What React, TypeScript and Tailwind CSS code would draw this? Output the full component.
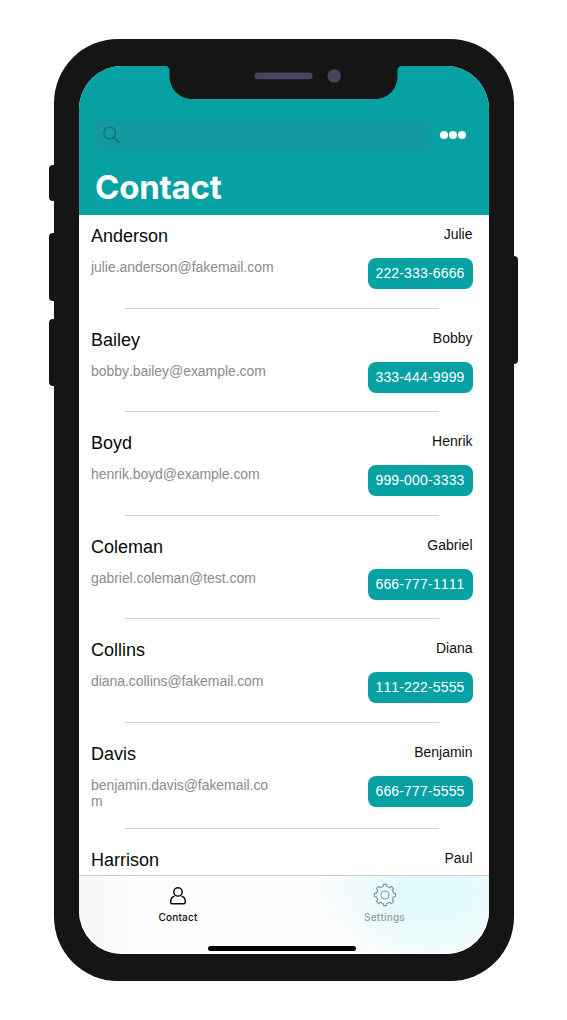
import React from "react";

type Contact = { last: string; first: string; email?: string; phone?: string };

const contacts: Contact[] = [
  { last: "Anderson", first: "Julie", email: "julie.anderson@fakemail.com", phone: "222-333-6666" },
  { last: "Bailey", first: "Bobby", email: "bobby.bailey@example.com", phone: "333-444-9999" },
  { last: "Boyd", first: "Henrik", email: "henrik.boyd@example.com", phone: "999-000-3333" },
  { last: "Coleman", first: "Gabriel", email: "gabriel.coleman@test.com", phone: "666-777-1111" },
  { last: "Collins", first: "Diana", email: "diana.collins@fakemail.com", phone: "111-222-5555" },
  { last: "Davis", first: "Benjamin", email: "benjamin.davis@fakemail.com", phone: "666-777-5555" },
  { last: "Harrison", first: "Paul" },
];

function SearchIcon() {
  return (
    <svg width="18" height="18" viewBox="0 0 18 18" fill="none" stroke="#176f70" strokeWidth="1.3">
      <circle cx="6.7" cy="7" r="5.9" />
      <path d="M11 11.3 16 16.3" strokeWidth="1.8" />
    </svg>
  );
}

function PersonIcon() {
  return (
    <svg width="18" height="20" viewBox="0 0 18 20" fill="none" stroke="#0c0c0c" strokeWidth="1.5" strokeLinejoin="round">
      <circle cx="9" cy="5.9" r="4.2" />
      <path d="M5.4 10.3C3 10.9 1.8 12.6 1.8 15v1.6c0 .7.5 1.1 1.1 1.1h12.2c.6 0 1.1-.4 1.1-1.1V15c0-2.4-1.2-4.1-3.6-4.7" />
    </svg>
  );
}

function gearPoint(radius: number, degrees: number) {
  const a = (degrees * Math.PI) / 180;
  return `${(12 + radius * Math.sin(a)).toFixed(2)} ${(12 - radius * Math.cos(a)).toFixed(2)}`;
}

// Eight square teeth joined by arcs along the rim of the wheel.
const gearPath =
  Array.from({ length: 8 }, (_, i) => {
    const c = i * 45;
    const start = i === 0 ? `M${gearPoint(8.7, c - 11.5)}` : `A8.7 8.7 0 0 1 ${gearPoint(8.7, c - 11.5)}`;
    return `${start}L${gearPoint(10.7, c - 8.5)}L${gearPoint(10.7, c + 8.5)}L${gearPoint(8.7, c + 11.5)}`;
  }).join("") + `A8.7 8.7 0 0 1 ${gearPoint(8.7, -11.5)}Z`;

function GearIcon() {
  return (
    <svg width="24" height="24" viewBox="0 0 24 24" fill="none" stroke="#78979b" strokeWidth="1.1" strokeLinejoin="round">
      <circle cx="12" cy="12" r="4" />
      <path d={gearPath} />
    </svg>
  );
}

function Notch() {
  return (
    <svg className="absolute left-[86px] top-0" width="237" height="33" viewBox="0 0 237 33">
      <path d="M0 0Q4.5 0 4.5 5V9.5C4.5 23 14 33 28 33H210C223 33 232.5 23 232.5 10V5Q232.5 0 237 0Z" fill="#151515" />
      <rect x="89.5" y="6.5" width="58" height="6.8" rx="3.4" fill="#48465e" />
      <circle cx="169.2" cy="9.9" r="6.7" fill="#48465e" />
    </svg>
  );
}

function Row({ contact }: { contact: Contact }) {
  return (
    <li className="shrink-0">
      <div className="flex min-h-[102.5px] justify-between pr-4 pl-3">
        <div className="w-[184px] pt-[21px]">
          <h2 className="text-[18px] leading-[21px] text-[#080808]">{contact.last}</h2>
          {contact.email && (
            <p className="mt-[12px] mb-[19px] text-[14px] leading-4 tracking-[-0.05px] break-all text-[#8b8b8b]">{contact.email}</p>
          )}
        </div>
        <div className="flex flex-col items-end pt-[20px] text-[14px]">
          <span className="leading-[18px] text-[#101010]">{contact.first}</span>
          {contact.phone && (
            <span className="mt-[15px] flex h-[31px] w-[105px] items-center justify-center rounded-[8px] bg-[#07a1a4] tracking-[0.16px] text-white">
              {contact.phone}
            </span>
          )}
        </div>
      </div>
      <div className="ml-[46px] h-px w-[314px] bg-[#d0d0d0]" />
    </li>
  );
}

export default function App() {
  return (
    <main className="flex h-[1020px] w-[567px] overflow-hidden bg-white pt-[39px] pl-[49px] font-['Liberation_Sans',Arial,sans-serif] [font-kerning:none]">
      <div className="flex w-[5px] shrink-0 flex-col pt-[126px]">
        <i className="h-[36px] rounded-l-[4px] bg-[#151515]" />
        <i className="mt-[32px] h-[68px] rounded-l-[4px] bg-[#151515]" />
        <i className="mt-[18px] h-[67px] rounded-l-[4px] bg-[#151515]" />
      </div>
      <div className="h-[942px] w-[459.5px] shrink-0 rounded-[64px] bg-[#151515] pt-[27px] pl-[25px]">
        <div className="relative flex h-[888px] w-[409.5px] flex-col overflow-hidden rounded-[43px] bg-white">
          <header className="h-[149px] shrink-0 bg-[#07a1a4] pt-[53px] pl-4">
            <div className="flex items-center">
              <div className="flex h-8 w-[335px] items-center rounded-[7px] bg-[#129b9e] pl-[8px]">
                <SearchIcon />
              </div>
              <div className="ml-[10px] flex gap-[1px]">
                <i className="size-[8px] rounded-full bg-white" />
                <i className="size-[8px] rounded-full bg-white" />
                <i className="size-[8px] rounded-full bg-white" />
              </div>
            </div>
            <h1 className="mt-[16px] font-['Inter',sans-serif] text-[33px] leading-[41px] font-bold tracking-[-0.2px] text-white">Contact</h1>
          </header>
          <ul className="-mt-[10px] flex min-h-0 flex-1 flex-col overflow-hidden [clip-path:inset(10px_0_0_0)]">
            {contacts.map((c) => (
              <Row key={c.last} contact={c} />
            ))}
          </ul>
          <nav className="flex h-[79px] shrink-0 flex-col border-t border-[#cecece] bg-[radial-gradient(ellipse_115px_80px_at_86%_18%,#e0f9fc,#e0f9fc_25%,transparent),linear-gradient(90deg,#f6f6f6,#fdfdfd_14%,#fdfdfd)]">
            <div className="flex h-[70px] justify-between pt-[7px] pr-[74px] pl-[69px] font-['Inter',sans-serif] text-[10px] leading-3 font-medium tracking-[0.2px]">
              <div className="flex w-[60px] flex-col items-center text-[#0c0c0c]">
                <div className="flex h-6 items-center pt-[1px]"><PersonIcon /></div>
                <span className="mt-1">Contact</span>
              </div>
              <div className="flex w-[60px] flex-col items-center text-[#92a1a3]">
                <GearIcon />
                <span className="mt-1">Settings</span>
              </div>
            </div>
            <div className="ml-[129px] h-[5px] w-[148px] shrink-0 rounded-full bg-black" />
          </nav>
          <Notch />
        </div>
      </div>
      <i className="mt-[217px] h-[108px] w-[4.5px] rounded-r-[4px] bg-[#151515]" />
    </main>
  );
}
